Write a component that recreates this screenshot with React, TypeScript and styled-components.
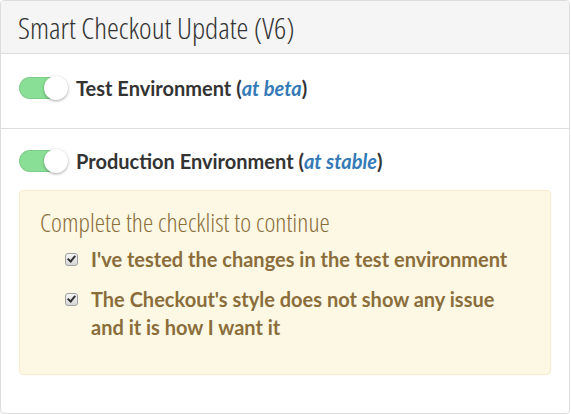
import React, { useState } from "react";
import styled, { createGlobalStyle } from "styled-components";

const GlobalStyle = createGlobalStyle`
  html, body {
    margin: 0;
    padding: 0;
    background: #fff;
  }
  body {
    font-family: Lato, "Open Sans", sans-serif;
    color: #333;
  }
`;

function Toggle({ on, onChange }: { on: boolean; onChange: () => void }) {
  return (
    <Track $on={on} onClick={onChange}>
      <Knob $on={on} />
    </Track>
  );
}

function App() {
  const [testOn, setTestOn] = useState(true);
  const [prodOn, setProdOn] = useState(true);
  const [checks, setChecks] = useState([true, true]);

  const toggleCheck = (i: number) => {
    setChecks((prev) => prev.map((c, idx) => (idx === i ? !c : c)));
  };

  return (
    <>
      <GlobalStyle />
      <Panel>
        <PanelHeading>Smart Checkout Update (V6)</PanelHeading>
        <Section>
          <EnvRow>
            <Toggle on={testOn} onChange={() => setTestOn(!testOn)} />
            <EnvLabel>
              Test Environment (<Stage>at beta</Stage>)
            </EnvLabel>
          </EnvRow>
        </Section>
        <Section $last>
          <EnvRow>
            <Toggle on={prodOn} onChange={() => setProdOn(!prodOn)} />
            <EnvLabel>
              Production Environment (<Stage>at stable</Stage>)
            </EnvLabel>
          </EnvRow>
          <Warning>
            <WarningTitle>Complete the checklist to continue</WarningTitle>
            <CheckList>
              <CheckItem>
                <Check
                  type="checkbox"
                  checked={checks[0]}
                  onChange={() => toggleCheck(0)}
                />
                <span>I've tested the changes in the test environment</span>
              </CheckItem>
              <CheckItem>
                <Check
                  type="checkbox"
                  checked={checks[1]}
                  onChange={() => toggleCheck(1)}
                />
                <span>
                  The Checkout's style does not show any issue and it is how I
                  want it
                </span>
              </CheckItem>
            </CheckList>
          </Warning>
        </Section>
      </Panel>
    </>
  );
}
export default App;

const Panel = styled.div`
  width: 570px;
  height: 414px;
  box-sizing: border-box;
  border: 1px solid #ddd;
  border-radius: 4px;
  background: #fff;
  overflow: hidden;
`;

const PanelHeading = styled.div`
  height: 53px;
  box-sizing: border-box;
  padding: 0 17px;
  display: flex;
  align-items: center;
  background: #f5f5f5;
  border-bottom: 1px solid #ddd;
  font-family: "Open Sans", sans-serif;
  font-stretch: 75%;
  font-weight: 350;
  font-size: 30px;
  color: #333;
`;

const Section = styled.div<{ $last?: boolean }>`
  padding: ${(p) => (p.$last ? "20px 18px 0" : "22px 18px 28px")};
  border-bottom: ${(p) => (p.$last ? "none" : "1px solid #ddd")};
`;

const EnvRow = styled.div`
  display: flex;
  align-items: center;
  gap: 9px;
  height: 24px;
`;

const Track = styled.div<{ $on: boolean }>`
  position: relative;
  width: 48px;
  height: 22px;
  border-radius: 11px;
  background: ${(p) => (p.$on ? "#8adf96" : "#ddd")};
  box-shadow: inset 0 0 0 1px rgba(0, 0, 0, 0.08);
  cursor: pointer;
  flex-shrink: 0;
`;

const Knob = styled.div<{ $on: boolean }>`
  position: absolute;
  top: -1px;
  left: ${(p) => (p.$on ? "25px" : "-1px")};
  width: 24px;
  height: 24px;
  border-radius: 50%;
  background: #fff;
  box-shadow: 0 1px 3px rgba(0, 0, 0, 0.35);
`;

const EnvLabel = styled.div`
  font-family: Lato, sans-serif;
  font-weight: 700;
  font-size: 20px;
  color: #333;
`;

const Stage = styled.i`
  color: #337ab7;
`;

const Warning = styled.div`
  margin-top: 17px;
  height: 185px;
  box-sizing: border-box;
  padding: 16px 20px;
  background: #fcf8e3;
  border: 1px solid #faebcc;
  border-radius: 4px;
  color: #8a6d3b;
`;

const WarningTitle = styled.div`
  font-family: "Open Sans", sans-serif;
  font-stretch: 75%;
  font-weight: 350;
  font-size: 26px;
  line-height: 30px;
  margin-bottom: 8px;
`;

const CheckList = styled.div`
  display: flex;
  flex-direction: column;
  gap: 12px;
  padding-left: 25px;
`;

const CheckItem = styled.label`
  display: flex;
  align-items: flex-start;
  gap: 13px;
  font-family: Lato, sans-serif;
  font-weight: 700;
  font-size: 20px;
  line-height: 28px;
  cursor: pointer;
`;

const Check = styled.input`
  appearance: none;
  position: relative;
  margin: 8px 0 0;
  width: 13px;
  height: 13px;
  flex-shrink: 0;
  box-sizing: border-box;
  border: 1px solid #a0a0a0;
  border-radius: 3px;
  background: linear-gradient(#f6f6f6, #d6d6d6);
  cursor: pointer;

  &:checked::after {
    content: "";
    position: absolute;
    left: 3px;
    top: 0px;
    width: 3px;
    height: 6px;
    border: solid #333;
    border-width: 0 2px 2px 0;
    transform: rotate(40deg);
  }
`;
